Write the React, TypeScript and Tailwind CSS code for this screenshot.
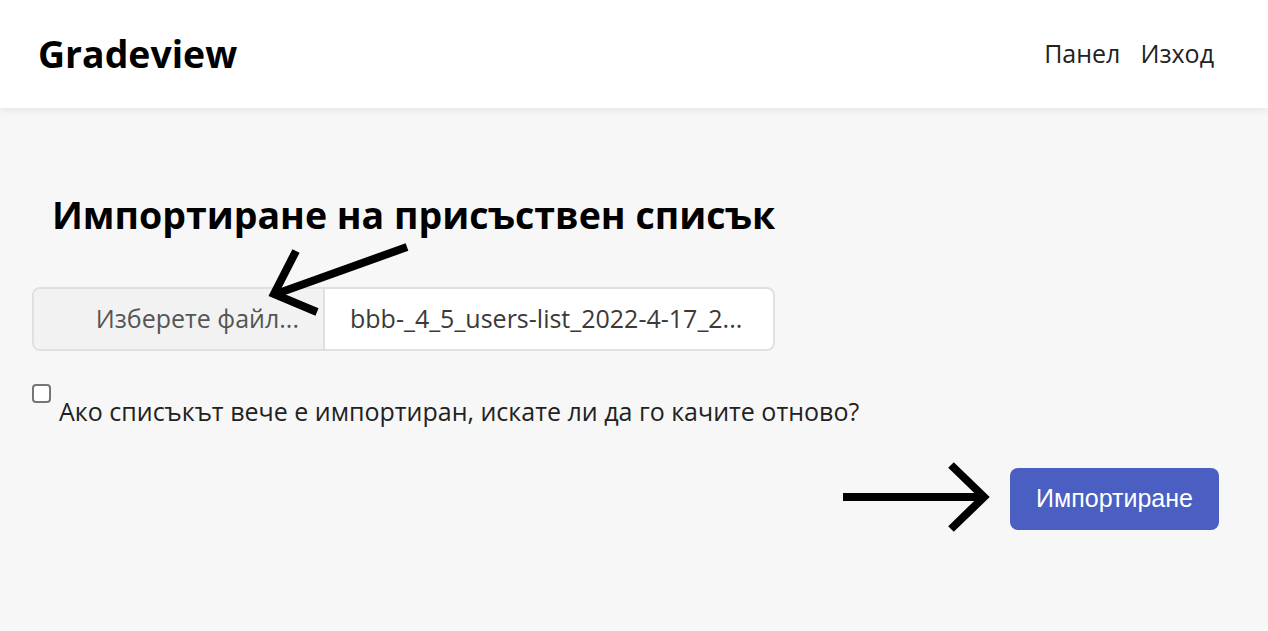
import React from "react";

export default function App() {
  return (
    <div className="relative min-h-[631px] w-[1268px] overflow-hidden bg-[#f7f7f7] font-['Open_Sans',sans-serif]">
      <header className="relative z-10 flex h-[108px] items-center justify-between bg-white pl-[38px] pr-[54px] shadow-[0_2px_8px_rgba(0,0,0,0.08)]">
        <div className="text-[37.4px] font-bold leading-none text-black">Gradeview</div>
        <nav className="flex gap-[20px] text-[25px] text-[#222]">
          <span>Панел</span>
          <span>Изход</span>
        </nav>
      </header>

      <main className="px-[32px] pt-[85px]">
        <h1 className="ml-[20px] text-[37.5px] font-bold leading-[44px] text-black">
          Импортиране на присъствен списък
        </h1>
        <div className="mt-[50px] flex h-[64px] w-[743px] overflow-hidden rounded-[8px] border-2 border-[#e0e0e0] bg-white">
          <div className="flex w-[291px] items-center justify-end border-r-2 border-[#e0e0e0] bg-[#f2f2f2] pr-[24px] text-[25px] text-[#555]">
            Изберете файл...
          </div>
          <div className="flex flex-1 items-center pl-[25px] text-[25px] text-[#3a3a3a]">
            bbb-_4_5_users-list_2022-4-17_2...
          </div>
        </div>
        <div className="mt-[32px] flex items-start">
          <div className="mt-[1px] h-[19px] w-[19px] rounded-[4px] border-2 border-[#767676] bg-white" />
          <span className="ml-[8px] mt-[11px] text-[25px] leading-[34px] text-[#222]">
            Ако списъкът вече е импортиран, искате ли да го качите отново?
          </span>
        </div>
        <div className="mt-[40px] flex justify-end pr-[17px]">
          <button className="h-[62px] w-[209px] rounded-[8px] bg-[#4a5fc1] font-['Liberation_Sans',Arial,sans-serif] text-[25px] text-white">
            Импортиране
          </button>
        </div>
      </main>

      <svg className="absolute left-0 top-0" width="1268" height="631" viewBox="0 0 1268 631" fill="none">
        <g stroke="#000" strokeWidth="8" strokeLinecap="butt" strokeLinejoin="miter">
          <line x1="407" y1="247" x2="276" y2="294" />
          <polyline points="296,251 274,294 317,312" />
          <line x1="843" y1="497" x2="984" y2="497" />
          <polyline points="951,465 984,497 951,529" />
        </g>
      </svg>
    </div>
  );
}
